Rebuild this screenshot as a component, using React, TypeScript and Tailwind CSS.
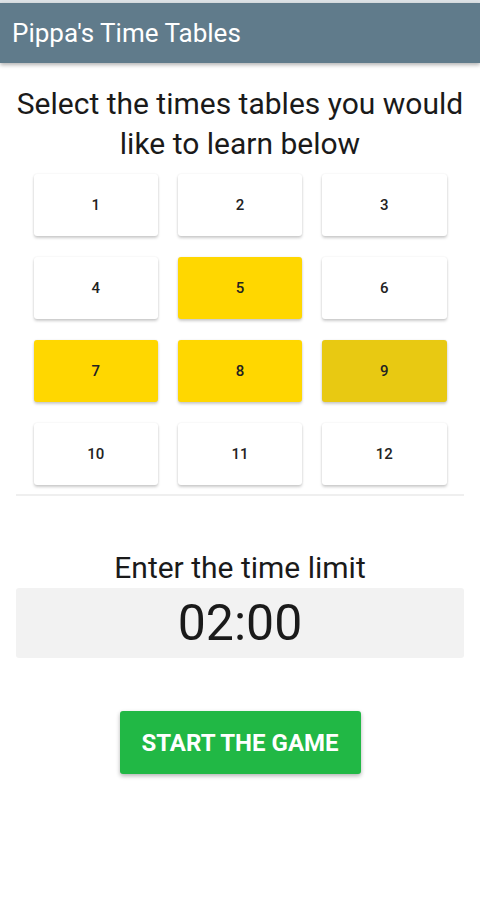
const tables = [1, 2, 3, 4, 5, 6, 7, 8, 9, 10, 11, 12];
const selected = [5, 7, 8];

export default function App() {
  return (
    <div className="min-h-[900px] bg-white font-['Roboto',sans-serif] text-[#1a1a1a]">
      <div className="h-[3px] bg-[#dde2e6]" />
      <header className="h-[60px] bg-[#607b8b] flex items-center px-3 shadow-[0_2px_4px_rgba(0,0,0,0.3)]">
        <h1 className="text-white text-[26px] leading-none">Pippa's Time Tables</h1>
      </header>

      <p className="mt-[21px] text-center text-[30px] leading-[40px] px-2">
        Select the times tables you would like to learn below
      </p>

      <div className="mt-[10px] mx-auto w-[413px] grid grid-cols-3 gap-x-[20px] gap-y-[21px]">
        {tables.map((n) => {
          let bg = 'bg-white';
          if (selected.includes(n)) bg = 'bg-[#ffd700]';
          if (n === 9) bg = 'bg-[#e8c912]';
          return (
            <button
              key={n}
              className={`${bg} h-[62px] rounded-[3px] text-[15px] font-medium text-[#222] shadow-[0_2px_3px_rgba(0,0,0,0.2),0_0_2px_rgba(0,0,0,0.08)]`}
            >
              {n}
            </button>
          );
        })}
      </div>

      <div className="mt-[9px] mx-4 h-[2px] bg-[#efefef]" />

      <p className="mt-[54px] text-center text-[30px] leading-[36px]">Enter the time limit</p>
      <div className="mt-[2px] mx-4 h-[70px] bg-[#f2f2f2] rounded-[3px] flex items-center justify-center">
        <span className="text-[50px] leading-none">02:00</span>
      </div>

      <div className="mt-[53px] flex justify-center">
        <button className="w-[241px] h-[63px] bg-[#21b845] rounded-[3px] text-white text-[24px] font-bold uppercase shadow-[0_2px_4px_rgba(0,0,0,0.3)]">
          Start the game
        </button>
      </div>
    </div>
  );
}
